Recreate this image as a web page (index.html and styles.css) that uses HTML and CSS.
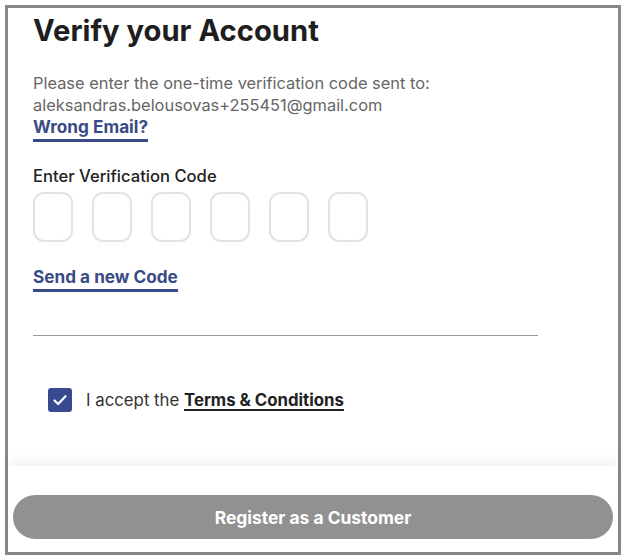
FILE: index.html
```html
<!DOCTYPE html>
<html>
<head>
<meta charset="utf-8">
<link rel="stylesheet" href="styles.css">
</head>
<body>
<div class="frame">
  <div class="content">
    <h1 class="title">Verify your Account</h1>
    <p class="intro">Please enter the one-time verification code sent to:<br>aleksandras.belousovas+255451@gmail.com</p>
    <a class="link" href="#">Wrong Email?</a>
    <div class="label">Enter Verification Code</div>
    <div class="codes">
      <input class="code" maxlength="1">
      <input class="code" maxlength="1">
      <input class="code" maxlength="1">
      <input class="code" maxlength="1">
      <input class="code" maxlength="1">
      <input class="code" maxlength="1">
    </div>
    <a class="link resend" href="#">Send a new Code</a>
    <hr class="divider">
    <label class="accept">
      <span class="check">
        <svg width="16" height="16" viewBox="0 0 16 16"><path d="M2.5 8.5 L6.2 12 L13.5 4.2" fill="none" stroke="#fff" stroke-width="2.2" stroke-linecap="round" stroke-linejoin="round"/></svg>
      </span>
      <span class="accept-text">I accept the <a class="terms" href="#">Terms &amp; Conditions</a></span>
    </label>
  </div>
  <div class="footer">
    <button class="submit">Register as a Customer</button>
  </div>
</div>
</body>
</html>
```

FILE: styles.css
```css
* { box-sizing: border-box; }
html, body { margin: 0; padding: 0; background: #fff; }
body { font-family: "Inter", "Lato", sans-serif; }
.frame {
  margin: 5px 0 0 5px;
  width: 616px;
  height: 550px;
  border: 3px solid #878787;
  display: flex;
  flex-direction: column;
  background: #fff;
}
.content {
  flex: 1;
  padding: 0 0 0 25px;
  display: flex;
  flex-direction: column;
  align-items: flex-start;
}
.title {
  margin: 5px 0 0;
  font-size: 29.2px;
  line-height: 36px;
  font-weight: 700;
  color: #1e1e1e;
}
.intro {
  margin: 23px 0 0;
  font-size: 16.4px;
  line-height: 22px;
  color: #666;
}
.link {
  color: #394b86;
  font-weight: 700;
  font-size: 17.2px;
  line-height: 22px;
  text-decoration: none;
  border-bottom: 3px solid #394b86;
  padding-bottom: 1px;
}
.label {
  margin-top: 23px;
  font-size: 16.6px;
  line-height: 22px;
  color: #222;
  font-weight: 500;
}
.codes {
  display: flex;
  gap: 19px;
  margin-top: 5px;
}
.code {
  width: 40px;
  height: 50px;
  border: 2px solid #e3e3e3;
  border-radius: 11px;
  background: #fff;
  outline: none;
  padding: 0;
}
.resend { margin-top: 24px; }
.divider {
  margin: 43px 0 0;
  width: 505px;
  border: none;
  border-top: 1px solid #999;
  height: 0;
}
.accept {
  margin: 52px 0 0 15px;
  display: flex;
  align-items: center;
  gap: 14px;
}
.check {
  width: 24px;
  height: 24px;
  border-radius: 3px;
  background: #38498f;
  display: flex;
  align-items: center;
  justify-content: center;
}
.accept-text {
  font-size: 16.8px;
  color: #333;
}
.terms {
  color: #222;
  font-weight: 700;
  text-decoration: underline;
  text-decoration-thickness: 2px;
  text-underline-offset: 3px;
}
.footer {
  height: 86px;
  padding: 29px 5px 0;
  box-shadow: 0 -6px 10px rgba(0,0,0,0.05);
  background: #fff;
}
.submit {
  width: 100%;
  height: 44px;
  border: none;
  border-radius: 22px;
  background: #919191;
  color: #fff;
  font-family: "Inter", "Lato", sans-serif;
  font-weight: 700;
  font-size: 17.4px;
}
```
